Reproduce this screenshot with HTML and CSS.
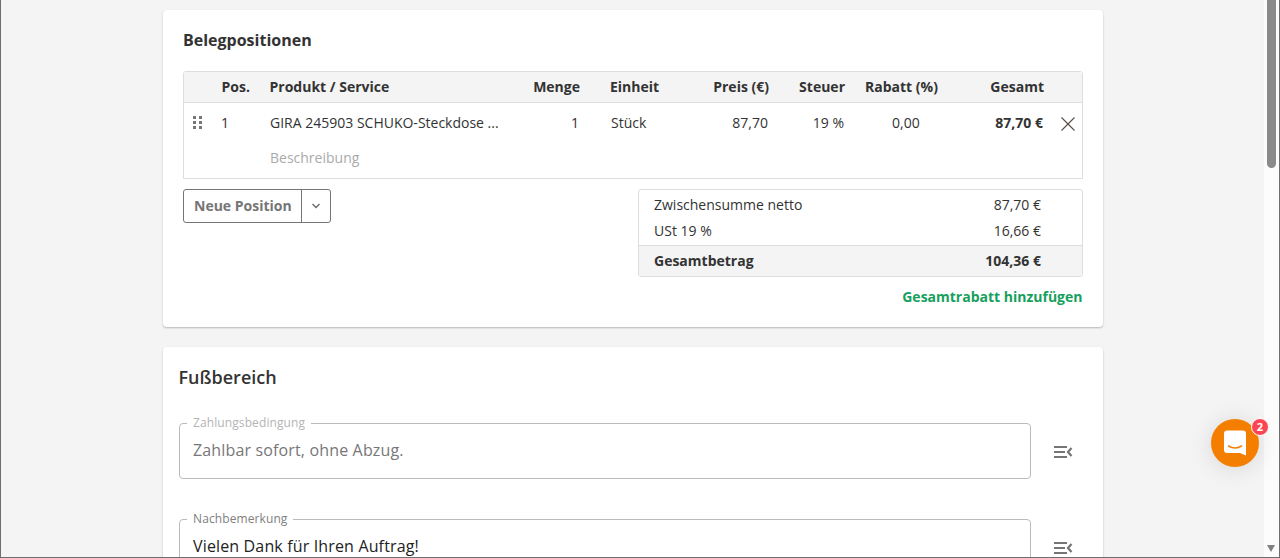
FILE: index.html
```html
<!DOCTYPE html>
<html lang="de">
<head>
<meta charset="utf-8">
<title>Beleg</title>
<link rel="stylesheet" href="styles.css">
</head>
<body>
<div class="window">
  <main class="content">
    <section class="card card-items">
      <h2 class="card-title">Belegpositionen</h2>
      <div class="table">
        <div class="grid head">
          <span></span>
          <span class="lead">Pos.</span>
          <span class="lead">Produkt / Service</span>
          <span class="right">Menge</span>
          <span class="unit">Einheit</span>
          <span class="right">Preis (€)</span>
          <span class="right">Steuer</span>
          <span class="discount">Rabatt (%)</span>
          <span class="right">Gesamt</span>
          <span></span>
        </div>
        <div class="grid row">
          <span class="handle">
            <svg width="10" height="14" viewBox="0 0 10 14"><g fill="#777"><rect x="0" y="0" width="3" height="3"/><rect x="6" y="0" width="3" height="3"/><rect x="0" y="5" width="3" height="3"/><rect x="6" y="5" width="3" height="3"/><rect x="0" y="10" width="3" height="3"/><rect x="6" y="10" width="3" height="3"/></g></svg>
          </span>
          <span>1</span>
          <span class="product">GIRA 245903 SCHUKO-Steckdose ...</span>
          <span class="right qty">1</span>
          <span class="unit unit-val">Stück</span>
          <span class="right">87,70</span>
          <span class="right">19 %</span>
          <span class="discount-val">0,00</span>
          <span class="right strong">87,70 €</span>
          <span class="remove">
            <svg width="14" height="14" viewBox="0 0 14 14"><path d="M.5.5l13 13M13.500.5l-13 13" stroke="#5a4c42" stroke-width="1.100" fill="none"/></svg>
          </span>
          <span class="description">Beschreibung</span>
        </div>
      </div>
      <div class="below">
        <div class="split-button">
          <span class="split-main">Neue Position</span>
          <span class="split-arrow">
            <svg width="10" height="6" viewBox="0 0 10 6"><path d="M1.500 1l3.500 3.500L8.500 1" stroke="#666" stroke-width="1.300" fill="none"/></svg>
          </span>
        </div>
        <div class="summary-col">
          <div class="summary">
            <div class="sum-line first"><span>Zwischensumme netto</span><span>87,70 €</span></div>
            <div class="sum-line"><span>USt 19 %</span><span>16,66 €</span></div>
            <div class="sum-total"><span>Gesamtbetrag</span><span>104,36 €</span></div>
          </div>
          <a class="add-discount">Gesamtrabatt hinzufügen</a>
        </div>
      </div>
    </section>
    <section class="card card-footer">
      <h2 class="footer-title">Fußbereich</h2>
      <div class="field-row">
        <fieldset class="field">
          <legend class="legend-muted">Zahlungsbedingung</legend>
          <div class="field-value muted">Zahlbar sofort, ohne Abzug.</div>
        </fieldset>
        <svg class="list-icon" width="20" height="14" viewBox="0 0 20 14"><g fill="#757575"><rect x="1" y="1" width="13" height="2"/><rect x="1" y="6" width="11" height="2"/><rect x="1" y="11" width="13" height="2"/></g><path d="M18.500 3L15 7l3.500 4" stroke="#757575" stroke-width="2.200" fill="none"/></svg>
      </div>
      <div class="field-row second">
        <fieldset class="field">
          <legend>Nachbemerkung</legend>
          <div class="field-value">Vielen Dank für Ihren Auftrag!</div>
        </fieldset>
        <svg class="list-icon" width="20" height="14" viewBox="0 0 20 14"><g fill="#757575"><rect x="1" y="1" width="13" height="2"/><rect x="1" y="6" width="11" height="2"/><rect x="1" y="11" width="13" height="2"/></g><path d="M18.500 3L15 7l3.500 4" stroke="#757575" stroke-width="2.200" fill="none"/></svg>
      </div>
    </section>
  </main>
  <div class="scrollbar">
    <div class="thumb"></div>
    <div class="arrow-down"></div>
  </div>
  <div class="chat">
    <svg width="24" height="26" viewBox="0 0 24 26"><path d="M4 .5h16a3 3 0 0 1 3 3v22l-6-2.500H4a3 3 0 0 1-3-3V3.500a3 3 0 0 1 3-3z" fill="#fff"/><path d="M5.500 16c4 2.500 9 2.500 13 0" stroke="#f47e00" stroke-width="1.500" fill="none" stroke-linecap="round"/></svg>
    <span class="chat-badge">2</span>
  </div>
</div>
</body>
</html>
```
FILE: styles.css
```css
* { box-sizing: border-box; }
html, body { margin: 0; height: 100%; overflow: hidden; }
body { font-family: "Open Sans", "Liberation Sans", sans-serif; color: #333; font-size: 14px; }
.window { position: relative; display: flex; height: 558px; background: #f4f4f4; border: solid #6e6e6e; border-width: 0 1px 1px 1px; overflow: hidden; }
.content { flex: 1; min-width: 0; padding: 10px 0 0 162px; overflow: hidden; }
.card { width: 940px; background: #fff; border-radius: 4px; box-shadow: 0 1px 2px rgba(0,0,0,.25); }
.card-items { height: 317px; padding: 20px; }
.card-footer { height: 300px; margin-top: 20px; padding: 16px; }
.card-title { margin: 0; font-size: 16px; line-height: 20px; font-weight: 700; }
.footer-title { margin: 2px 0 0 -.5px; font-size: 18px; line-height: 24px; font-weight: 600; }
.table { margin-top: 21px; border: 1px solid #ddd; border-radius: 3px 3px 0 0; }
.grid { display: grid; grid-template-columns: 37px 48px 241px 70px 100px 89px 76px 99px 100px 38px; }
.head { height: 31px; align-items: center; background: #f4f4f4; border-bottom: 1px solid #ddd; font-weight: 700; line-height: 30px; }
.lead { padding-left: .5px; }
.row { height: 75px; grid-template-rows: 38px 34px; align-content: start; align-items: center; }
.right { text-align: right; }
.row .right { padding-right: 1px; }
.unit { padding-left: 30px; }
.unit-val { padding-left: 31px; }
.discount { padding-left: 20px; }
.discount-val { padding-left: 47px; }
.product, .description { padding-left: 1px; }
.description { grid-column: 3 / 6; grid-row: 2; color: #aaa; line-height: 20px; }
.strong { font-weight: 700; }
.handle { display: flex; padding-left: 9px; padding-top: 2px; }
.remove { display: flex; padding-left: 17px; padding-top: 3px; }
.below { display: flex; justify-content: space-between; align-items: flex-start; margin-top: 10px; }
.split-button { display: flex; height: 34px; border: 1px solid #757575; border-radius: 3px; font-weight: 700; color: #757575; }
.split-main { display: flex; align-items: center; padding: 0 9px 2px 10px; border-right: 1px solid #757575; }
.split-arrow { display: flex; align-items: center; justify-content: center; width: 28px; }
.summary-col { display: flex; flex-direction: column; width: 445px; }
.summary { border: 1px solid #ddd; border-radius: 3px; overflow: hidden; }
.sum-line { display: flex; justify-content: space-between; height: 25px; line-height: 21px; padding: 0 41px 0 15px; }
.sum-line.first { height: 30px; line-height: 30px; }
.sum-total { display: flex; justify-content: space-between; height: 31px; line-height: 30px; padding: 0 41px 0 15px; font-weight: 700; background: #f4f4f4; border-top: 1px solid #ddd; }
.add-discount { margin-top: 10px; padding-right: .5px; text-align: right; font-weight: 700; line-height: 20px; color: #16a05d; }
.field-row { display: flex; align-items: center; margin-top: 27px; }
.field-row.second { margin-top: 33px; }
.field { flex: none; width: 852px; height: 63px; margin: 0; padding: 0 13px; border: 1px solid #bbb; border-radius: 4px; }
.field legend { padding: 0 6px; margin-left: -6px; font-size: 12px; line-height: 14px; letter-spacing: .1px; color: #808080; }
.field legend.legend-muted { color: #b4b4b4; }
.field-value { font-size: 16px; line-height: 22px; letter-spacing: .15px; margin-top: 9px; color: #222; }
.field-value.muted { color: #777; }
.list-icon { flex: none; margin-left: 22px; margin-top: 8px; }
.scrollbar { flex: none; width: 15px; position: relative; background: #fcfcfc; }
.thumb { position: absolute; left: 3px; top: 0; width: 9px; height: 168px; background: #8a8a8a; border-radius: 0 0 5px 5px; }
.arrow-down { position: absolute; left: 3px; bottom: 5px; width: 0; height: 0; border: solid transparent; border-width: 7px 4.5px 0 4.5px; border-top-color: #808080; }
.chat { position: absolute; left: 1210px; top: 419px; width: 48px; height: 48px; display: flex; align-items: center; justify-content: center; border-radius: 50%; background: #f47e00; box-shadow: 0 2px 24px rgba(0,0,0,.12); }
.chat-badge { position: absolute; right: -10px; top: -1px; width: 18px; height: 18px; border: 1px solid #fff; border-radius: 50%; background: #fa4653; color: #fff; font-size: 11px; line-height: 16px; font-weight: 700; text-align: center; }
```
